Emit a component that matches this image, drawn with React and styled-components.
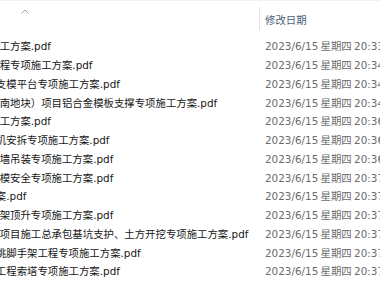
import { useLayoutEffect, useRef } from 'react'
import styled, { createGlobalStyle } from 'styled-components'

const vars = {
    text: '#161616',
    muted: '#6b6b6b',
    header: '#4c607a',
    divider: '#e3e3e3',
    font: "'DejaVu Sans', 'Noto Sans CJK SC', sans-serif",
    fs: '10.4px',
    row: '18.75px',
    nameWidth: '468px',
    dateWidth: '160px',
}

// 가로 스크롤 위치 (이름 열 왼쪽이 잘려 보임)
const SCROLL_X = 209

const GlobalStyle = createGlobalStyle`
    html, body {
        margin: 0;
        padding: 0;
        background: #fff;
        overflow: hidden;
    }
    body {
        font-family: ${vars.font};
        font-size: ${vars.fs};
        color: ${vars.text};
    }
`

const Viewport = styled.div`
    width: 380px;
    height: 282px;
    overflow: hidden;
    border-top: 1px solid #f1f1f1;
    box-sizing: border-box;
`

const Sheet = styled.div`
    width: max-content;
`

const HeaderRow = styled.div`
    display: flex;
    align-items: center;
    height: 32px;
    padding-top: 2px;
    box-sizing: border-box;
`

const NameHeader = styled.div`
    width: ${vars.nameWidth};
    align-self: stretch;
    display: flex;
    flex-direction: column;
    align-items: center;
    padding-top: 6px;
    box-sizing: border-box;
`

const Divider = styled.span`
    width: 1px;
    height: 23px;
    background: ${vars.divider};
`

const HeaderLabel = styled.div`
    width: ${vars.dateWidth};
    padding: 2px 0 0 5px;
    color: ${vars.header};
    white-space: nowrap;
`

const List = styled.div`
    padding-top: 3.5px;
`

const Row = styled.div`
    display: flex;
    align-items: center;
    height: ${vars.row};
    white-space: nowrap;
`

const NameCell = styled.div`
    width: ${vars.nameWidth};
    display: flex;
    align-items: center;
    gap: 6px;
    padding-left: 10px;
    box-sizing: border-box;
    overflow: hidden;
    color: ${vars.text};
`

const DateCell = styled.div`
    width: ${vars.dateWidth};
    padding-left: 6px;
    color: ${vars.muted};
    word-spacing: -1px;
`

const SortUp = () => (
    <svg width="8" height="5" viewBox="0 0 8 5">
        <polyline
            points="0.5,4.5 4,1 7.5,4.5"
            fill="none"
            stroke="#a0a4a8"
            strokeWidth="1"
        />
    </svg>
)

const PdfIcon = () => (
    <svg width="16" height="16" viewBox="0 0 16 16">
        <path d="M3 1h7l3 3v11H3z" fill="#fff" stroke="#b8b8b8" />
        <rect x="2" y="8" width="9" height="5" fill="#d93025" />
    </svg>
)

const P = '中建某局知识城北片区'

const files = [
    { head: P + '项目临时用电施', tail: '工方案.pdf', time: '20:33' },
    { head: P + '项目高大模板工', tail: '程专项施工方案.pdf', time: '20:34' },
    { head: P + '项目1号楼主体', tail: '支模平台专项施工方案.pdf', time: '20:34' },
    { head: '中建某局广州市黄埔区知识城北片区（', tail: '南地块）项目铝合金模板支撑专项施工方案.pdf', time: '20:34' },
    { head: P + '项目塔吊基础施', tail: '工方案.pdf', time: '20:36' },
    { head: P + '1号楼施工升降', tail: '机安拆专项施工方案.pdf', time: '20:36' },
    { head: P + '项目玻璃单元幕', tail: '墙吊装专项施工方案.pdf', time: '20:36' },
    { head: P + '项目地下室高支', tail: '模安全专项施工方案.pdf', time: '20:37' },
    { head: P + '1号地块应急预', tail: '案.pdf', time: '20:37' },
    { head: P + '项目附着式升降', tail: '架顶升专项施工方案.pdf', time: '20:37' },
    { head: '广州市黄埔区中新知识城北片区安置房', tail: '项目施工总承包基坑支护、土方开挖专项施工方案.pdf', time: '20:37' },
    { head: P + '1号楼工字钢悬', tail: '挑脚手架工程专项施工方案.pdf', time: '20:37' },
    { head: P + '1号斜拉桥主体', tail: '工程索塔专项施工方案.pdf', time: '20:37' },
]

export default function App() {
    const viewRef = useRef(null)

    useLayoutEffect(() => {
        if (viewRef.current) viewRef.current.scrollLeft = SCROLL_X
    }, [])

    return (
        <>
            <GlobalStyle />
            <Viewport ref={viewRef}>
                <Sheet>
                    <HeaderRow>
                        <NameHeader>
                            <SortUp />
                        </NameHeader>
                        <Divider />
                        <HeaderLabel>修改日期</HeaderLabel>
                    </HeaderRow>
                    <List>
                        {files.map((f, i) => (
                            <Row key={i}>
                                <NameCell>
                                    <PdfIcon />
                                    <span>{f.head + f.tail}</span>
                                </NameCell>
                                <DateCell>2023/6/15 星期四 {f.time}</DateCell>
                            </Row>
                        ))}
                    </List>
                </Sheet>
            </Viewport>
        </>
    )
}
